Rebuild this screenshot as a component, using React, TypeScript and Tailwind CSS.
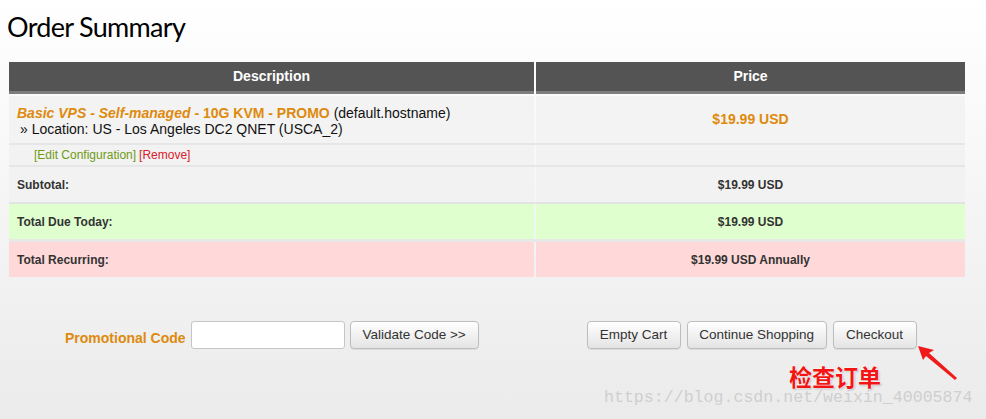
import React from 'react';

const orange = 'text-[#de8a0d]';

function Btn({ label, w }: { label: string; w: string }) {
    return (
        <button
            className={`${w} h-[28px] rounded-[4px] border border-[#bdbdbd] bg-gradient-to-b from-white to-[#e4e4e4] text-[13.5px] text-[#333] shadow-[0_1px_1px_rgba(0,0,0,0.08)]`}
        >
            {label}
        </button>
    );
}

export default function App() {
    return (
        <div className="relative w-[986px] h-[419px] overflow-hidden bg-gradient-to-b from-white to-[#ebebeb] font-['Liberation_Sans',Arial,sans-serif] text-[#222]">
            <h1 className="pl-[7px] pt-[7px] h-[62px] font-['Lato',sans-serif] font-normal text-[27px] tracking-[-0.7px] text-black">
                Order Summary
            </h1>

            {/* Cart table */}
            <div className="ml-[9px] w-[956px] flex flex-col">
                <div className="flex gap-[2px]">
                    <div className="w-[525px] h-[32px] bg-[#545454] border-b-[3px] border-[#7d7d7d] flex items-center justify-center text-white font-bold text-[14px]">
                        Description
                    </div>
                    <div className="flex-1 h-[32px] bg-[#545454] border-b-[3px] border-[#7d7d7d] flex items-center justify-center text-white font-bold text-[14px]">
                        Price
                    </div>
                </div>

                <div className="flex gap-[2px] mt-[2px] border-b-2 border-[#e6e6e6]">
                    <div className="w-[525px] h-[47px] bg-[#f3f3f3] pl-[8px] pt-[9px] text-[14px] leading-[16px] text-[#111]">
                        <div>
                            <span className={`${orange} font-bold italic`}>Basic VPS - Self-managed</span>
                            <span className={`${orange} font-bold`}> - 10G KVM - PROMO</span> (default.hostname)
                        </div>
                        <div className="pl-[3px]">&raquo; Location: US - Los Angeles DC2 QNET (USCA_2)</div>
                    </div>
                    <div className={`flex-1 h-[47px] bg-[#f3f3f3] flex items-center justify-center font-bold text-[14px] ${orange}`}>
                        $19.99 USD
                    </div>
                </div>

                <div className="flex gap-[2px] border-b-2 border-[#e6e6e6]">
                    <div className="w-[525px] h-[20px] bg-[#f2f2f2] pl-[25px] flex items-center text-[12px]">
                        <span className="text-[#6f9a16]">[Edit Configuration]</span>
                        <span className="text-[#d8202a] ml-[3px]">[Remove]</span>
                    </div>
                    <div className="flex-1 h-[20px] bg-[#f2f2f2]" />
                </div>

                <div className="flex gap-[2px] border-b-2 border-[#e3e3e3]">
                    <div className="w-[525px] h-[35px] bg-[#f2f2f2] pl-[8px] flex items-center font-bold text-[12px] text-[#333]">Subtotal:</div>
                    <div className="flex-1 h-[35px] bg-[#f2f2f2] flex items-center justify-center font-bold text-[12px] text-[#333]">$19.99 USD</div>
                </div>

                <div className="flex gap-[2px] border-b-[3px] border-[#e8e8e8]">
                    <div className="w-[525px] h-[35px] bg-[#dfffcf] pl-[8px] flex items-center font-bold text-[12px] text-[#333]">Total Due Today:</div>
                    <div className="flex-1 h-[35px] bg-[#dfffcf] flex items-center justify-center font-bold text-[12px] text-[#333]">$19.99 USD</div>
                </div>

                <div className="flex gap-[2px]">
                    <div className="w-[525px] h-[35px] bg-[#ffd9d9] pl-[8px] flex items-center font-bold text-[12px] text-[#333]">Total Recurring:</div>
                    <div className="flex-1 h-[35px] bg-[#ffd9d9] flex items-center justify-center font-bold text-[12px] text-[#333]">$19.99 USD Annually</div>
                </div>
            </div>

            {/* Promo + actions */}
            <div className="flex items-center mt-[44px]">
                <span className={`ml-[65px] mt-[7px] font-bold text-[14px] ${orange}`}>Promotional Code</span>
                <input className="ml-[5px] w-[154px] h-[28px] rounded-[3px] border border-[#c6c6c6] bg-white" />
                <div className="ml-[5px]"><Btn label="Validate Code >>" w="w-[129px]" /></div>
                <div className="ml-[108px] flex gap-[6px]">
                    <Btn label="Empty Cart" w="w-[94px]" />
                    <Btn label="Continue Shopping" w="w-[140px]" />
                    <Btn label="Checkout" w="w-[84px]" />
                </div>
            </div>

            {/* annotation */}
            <svg className="absolute left-[912px] top-[340px]" width="50" height="45" viewBox="0 0 50 45">
                <path d="M6 6 L22 10 L17 13 L45 38 L43 40 L14 16 L11 20 Z" fill="#f01a1a" />
            </svg>
            <div className="absolute left-[789px] top-[362px] font-['Noto_Sans_CJK_SC',sans-serif] font-bold text-[23px] leading-[28px] text-[#f51414] [text-shadow:0_0_2px_#fff,0_0_2px_#fff,1px_1px_2px_rgba(0,0,0,0.3)]">
                检查订单
            </div>
            <div className="absolute left-[604px] top-[386px] font-['Liberation_Mono',monospace] text-[16.6px] leading-[24px] text-[#cfcfcf]">
                https://blog.csdn.net/weixin_40005874
            </div>
        </div>
    );
}
